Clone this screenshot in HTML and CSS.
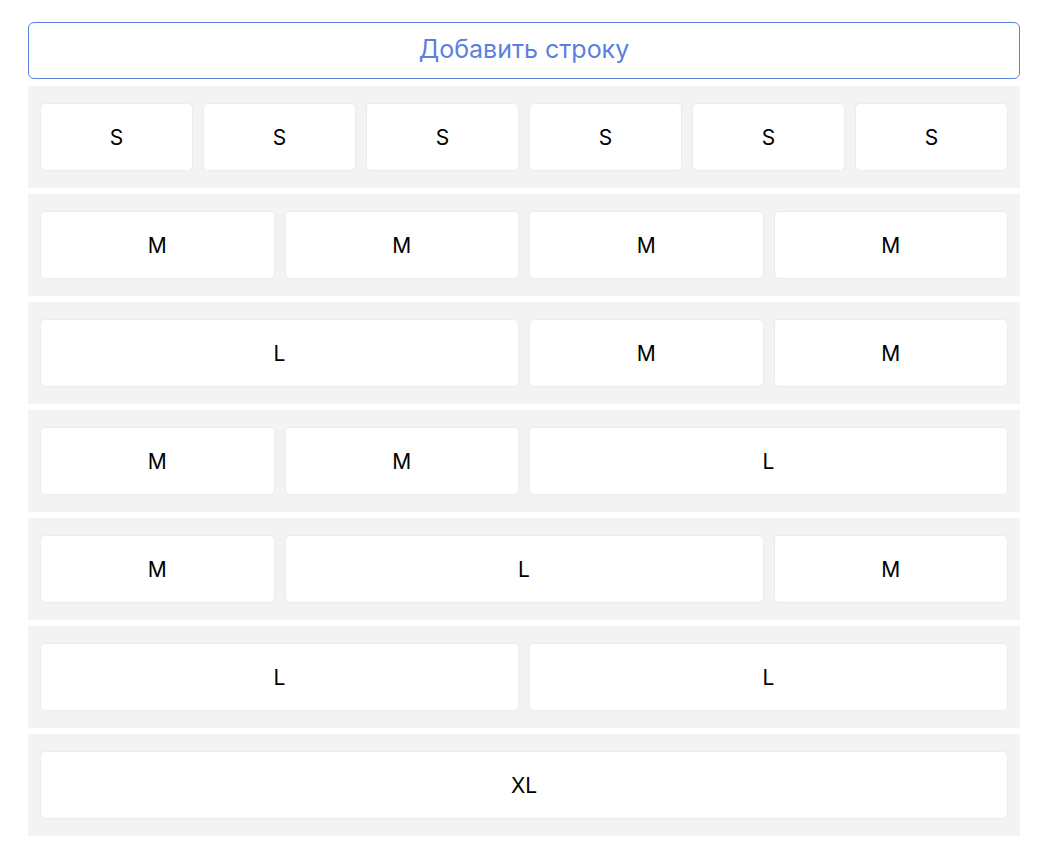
FILE: index.html
```html
<!DOCTYPE html>
<html lang="ru">
<head>
<meta charset="utf-8">
<title>Rows</title>
<link rel="stylesheet" href="styles.css">
</head>
<body>
<div class="page">
  <button class="add-btn" type="button">Добавить строку</button>
  <div class="rows">
    <div class="row">
      <div class="col s"><div class="cell">S</div></div>
      <div class="col s"><div class="cell">S</div></div>
      <div class="col s"><div class="cell">S</div></div>
      <div class="col s"><div class="cell">S</div></div>
      <div class="col s"><div class="cell">S</div></div>
      <div class="col s"><div class="cell">S</div></div>
    </div>
    <div class="row">
      <div class="col m"><div class="cell">M</div></div>
      <div class="col m"><div class="cell">M</div></div>
      <div class="col m"><div class="cell">M</div></div>
      <div class="col m"><div class="cell">M</div></div>
    </div>
    <div class="row">
      <div class="col l"><div class="cell">L</div></div>
      <div class="col m"><div class="cell">M</div></div>
      <div class="col m"><div class="cell">M</div></div>
    </div>
    <div class="row">
      <div class="col m"><div class="cell">M</div></div>
      <div class="col m"><div class="cell">M</div></div>
      <div class="col l"><div class="cell">L</div></div>
    </div>
    <div class="row">
      <div class="col m"><div class="cell">M</div></div>
      <div class="col l"><div class="cell">L</div></div>
      <div class="col m"><div class="cell">M</div></div>
    </div>
    <div class="row">
      <div class="col l"><div class="cell">L</div></div>
      <div class="col l"><div class="cell">L</div></div>
    </div>
    <div class="row">
      <div class="col xl"><div class="cell">XL</div></div>
    </div>
  </div>
</div>
</body>
</html>
```
FILE: styles.css
```css
* { box-sizing: border-box; }
html, body { margin: 0; padding: 0; background: #fff; }
body {
  font-family: "Inter", "Roboto", "Liberation Sans", sans-serif;
  color: #000;
}
.page {
  padding: 22px 30px 0 28px;
  display: flex;
  flex-direction: column;
}
.add-btn {
  height: 57px;
  width: 100%;
  border: 1.5px solid #5b80e0;
  border-radius: 6px;
  background: #fff;
  color: #5b80e0;
  font-family: inherit;
  font-size: 25px;
  margin: 0 0 7px 0;
  padding: 0 0 4px 0;
  cursor: pointer;
}
.rows {
  display: flex;
  flex-direction: column;
  gap: 6px;
}
.row {
  display: flex;
  background: #f3f3f3;
  height: 102px;
  padding: 17px 7px 17px;
}
.col {
  padding: 0 5px;
  display: flex;
}
.col.s { flex: 0 0 16.6667%; }
.col.m { flex: 0 0 25%; }
.col.l { flex: 0 0 50%; }
.col.xl { flex: 0 0 100%; }
.cell {
  flex: 1;
  background: #fff;
  border: 1px solid #ececec;
  border-radius: 5px;
  display: flex;
  align-items: center;
  justify-content: center;
  font-size: 21px;
}
```
